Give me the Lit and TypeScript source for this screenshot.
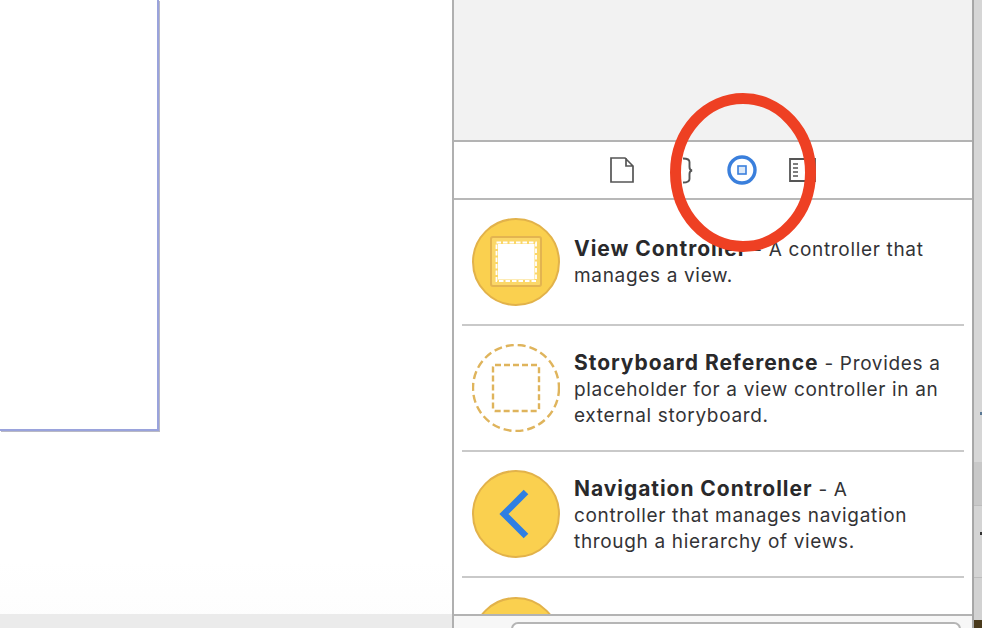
import { LitElement, html, css } from "lit";
import { customElement } from "lit/decorators.js";

@customElement("app-root")
export class AppRoot extends LitElement {
  static styles = css`
    :host { display: block; width: 982px; height: 628px; position: relative; overflow: hidden; background: #fff;
      font-family: Inter, "Liberation Sans", sans-serif; color: #2b2b2d; }
    .page { display: flex; height: 628px; }
    .canvas { width: 452px; display: flex; flex-direction: column; flex: none; background: linear-gradient(#fff 0 560px, #fdfdfd); }
    .canvas-main { flex: 1; }
    .scene { width: 157px; height: 429px; box-sizing: content-box; border-right: 2px solid #9aa3dc; border-bottom: 2px solid #9aa3dc; box-shadow: 1px 1px 0 #b9b9c4; }
    .canvas-foot { height: 14px; background: #ebebeb; }
    .inspector { width: 518px; flex: none; display: flex; flex-direction: column; border-left: 2px solid #b0b0b0; border-right: 1px solid #a8a8a8; }
    .top { height: 140px; background: #f2f2f2; border-bottom: 2px solid #b3b3b3; flex: none; }
    .tabs { height: 56px; flex: none; border-bottom: 2px solid #b8b8b8; display: flex; align-items: center; justify-content: center; gap: 30px; padding-right: 2px; }
    .tabs svg { display: block; width: 30px; height: 30px; }
    .list { flex: 1; min-height: 0; overflow: hidden; padding: 0 8px; }
    .row { height: 124px; border-bottom: 2px solid #c9c9c9; display: flex; align-items: center; gap: 14px; padding: 0 0 0 10px; }
    .row svg { width: 88px; height: 88px; flex: none; display: block; }
    .row.last { border: 0; height: 60px; align-items: flex-start; padding-top: 19px; box-sizing: border-box; }
    .text { font-size: 19px; line-height: 26px; letter-spacing: 0.67px; width: 368px; font-weight: 400; color: #333336; padding-top: 2px; }
    .row:first-child .text { padding-top: 0; }
    .text b { font-size: 21px; font-weight: 700; color: #29292b; letter-spacing: 0.95px; }
    .foot { flex: none; border-top: 2px solid #b3b3b3; background: #f7f7f7; padding: 6px 11px 0 57px; overflow: hidden; box-sizing: border-box; height: 14px; }
    .search { height: 20px; border: 2px solid #b5b5b5; border-radius: 7px; background: #fff; }
    .strip { flex: 1; display: flex; flex-direction: column; position: relative; border-left: 1px solid #a6a6a6; }
    .strip i { display: block; }
    .s1 { height: 462px; background: #d6d6d6; }
    .s2 { height: 43px; background: #c8c8c8; border-bottom: 1px solid #bdbdbd; }
    .s3 { height: 71px; background: #d4d4d4; border-bottom: 1px solid #bdbdbd; }
    .s4 { height: 42px; background: #d2d2d2; }
    .s5 { flex: 1; background: #4a3a1c; }
    .dot { position: absolute; right: 0; width: 2px; height: 3px; }
    .dot.a { top: 412px; background: #5a7894; }
    .dot.b { top: 532px; background: #333; }
    .mark { position: absolute; left: 670px; top: 92px; width: 146px; height: 162px; pointer-events: none; }
  `;

  private rows = [
    { title: "View Controller", rest: " - A controller that manages a view.", kind: "vc" },
    { title: "Storyboard Reference", rest: " - Provides a placeholder for a view controller in an external storyboard.", kind: "ref" },
    { title: "Navigation Controller", rest: " - A controller that manages navigation through a hierarchy of views.", kind: "nav" },
  ];

  private icon(kind: string) {
    if (kind === "vc") return html`<svg viewBox="0 0 88 88">
      <circle cx="44" cy="44" r="43" fill="#fad04f" stroke="#e2b24a" stroke-width="2"/>
      <rect x="19" y="19" width="50" height="49" rx="2" fill="#fbd768" stroke="#e3b450" stroke-width="2"/>
      <rect x="26" y="26" width="36.500" height="35.500" fill="#fff"/>
      <rect x="24.500" y="24.500" width="39.500" height="38.500" fill="none" stroke="#fff" stroke-width="1.800" stroke-dasharray="4.500 2"/>
    </svg>`;
    if (kind === "ref") return html`<svg viewBox="0 0 88 88">
      <circle cx="44" cy="44" r="43" fill="none" stroke="#dfb45c" stroke-width="2.400" stroke-dasharray="8 4"/>
      <rect x="21" y="21" width="46" height="46" rx="2" fill="none" stroke="#dfb45c" stroke-width="2.400" stroke-dasharray="6 3"/>
    </svg>`;
    return html`<svg viewBox="0 0 88 88">
      <circle cx="44" cy="44" r="43" fill="#fad04f" stroke="#e2b24a" stroke-width="2"/>
      <path d="M54 22 L32 44 L54 66" fill="none" stroke="#2f7fe3" stroke-width="6.500"/>
    </svg>`;
  }

  render() {
    return html`
      <div class="page">
        <div class="canvas">
          <div class="canvas-main"><div class="scene"></div></div>
          <div class="canvas-foot"></div>
        </div>
        <div class="inspector">
          <div class="top"></div>
          <div class="tabs">
            <svg viewBox="0 0 30 30"><path d="M4 3H18L26 11V27H4Z M19 3V11H26" fill="none" stroke="#555" stroke-width="1.700"/></svg>
            <svg viewBox="0 0 30 30"><path d="M11 3.500C8 3.500 7.500 4.500 7.500 7V12C7.500 14 7 15 4.500 15.500C7 16 7.500 17 7.500 19V24C7.500 26.500 8 27.500 11 27.500M16 3.500C21 3.500 22.500 4.500 22.500 7V12C22.500 14 23 15 25 15.500C23 16 22.500 17 22.500 19V24C22.500 26.500 21 27.500 16 27.500" fill="none" stroke="#555" stroke-width="1.900"/></svg>
            <svg viewBox="0 0 30 30"><circle cx="15" cy="15" r="13" fill="none" stroke="#3a7fdc" stroke-width="3.400"/><rect x="11" y="11" width="8" height="8" fill="#dce9f8" stroke="#3a7fdc" stroke-width="1.600"/></svg>
            <svg viewBox="0 0 30 30"><path d="M3 4H28V26H3Z" fill="none" stroke="#555" stroke-width="1.800"/><path d="M6 9H11M6 13H11M6 17H11M6 21H11" stroke="#555" stroke-width="1.700"/></svg>
          </div>
          <div class="list">
            ${this.rows.map((r) => html`<div class="row">${this.icon(r.kind)}<div class="text"><b>${r.title}</b>${r.rest}</div></div>`)}
            <div class="row last"><svg viewBox="0 0 88 88"><circle cx="44" cy="44" r="43" fill="#fad04f" stroke="#e2b24a" stroke-width="2"/></svg></div>
          </div>
          <div class="foot"><div class="search"></div></div>
        </div>
        <div class="strip"><i class="s1"></i><i class="s2"></i><i class="s3"></i><i class="s4"></i><i class="s5"></i><span class="dot a"></span><span class="dot b"></span></div>
      </div>
      <svg class="mark" viewBox="0 0 146 162"><ellipse cx="73" cy="80.500" rx="67.500" ry="74" fill="none" stroke="#ee4023" stroke-width="11"/></svg>
    `;
  }
}
